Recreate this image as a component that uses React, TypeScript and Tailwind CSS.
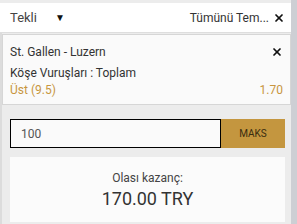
import { X } from 'lucide-react';

export default function App() {
  return (
    <div className="w-[297px] h-[224px] flex bg-[#ececec] overflow-hidden text-[#333] font-['Roboto',sans-serif] text-[12px]">
      <div className="w-[291px] flex flex-col">
        {/* Header */}
        <div className="mt-[3px] h-[30px] bg-white border-b border-[#dedede] flex items-center justify-between pl-[10px] pr-[6px]">
          <div className="flex items-center">
            <span className="text-[13px] text-[#444]">Tekli</span>
            <span className="ml-[18px] text-[10px] text-[#111]">▼</span>
          </div>
          <div className="flex items-center gap-[4px]">
            <span className="text-[12px] text-[#333]">Tümünü Tem...</span>
            <X className="w-[12px] h-[12px] text-[#111]" strokeWidth={3.5} />
          </div>
        </div>

        {/* Body */}
        <div className="flex-1 border-l-2 border-[#dcdcdc] flex flex-col">
          {/* Selection card */}
          <div className="mt-[1px] h-[71px] bg-[#fafafa] border border-[#d6d6d6] pl-[7px] pr-[7px] pt-[9px] flex flex-col">
            <div className="h-[16px] flex items-center justify-between">
              <span className="text-[12px]">St. Gallen - Luzern</span>
              <X className="w-[12px] h-[12px] text-[#111]" strokeWidth={3.5} />
            </div>
            <div className="h-[16px] mt-[5px] flex items-center">
              <span className="text-[12px]">Köşe Vuruşları : Toplam</span>
            </div>
            <div className="h-[16px] mt-[1px] flex items-center justify-between text-[#c8963e]">
              <span>Üst (9.5)</span>
              <span className="mr-[0px]">1.70</span>
            </div>
          </div>

          {/* Stake input */}
          <div className="mt-[14px] ml-[8px] flex h-[29px] w-[275px]">
            <div className="flex-1 bg-[#fafafa] border border-black flex items-center pl-[10px] text-[12px] text-[#555]">
              100
            </div>
            <div className="w-[64px] bg-[#c4963f] flex items-center justify-center text-[10px] text-[#3a2c10]">
              MAKS
            </div>
          </div>

          {/* Potential win */}
          <div className="mt-[9px] ml-[8px] w-[275px] h-[65px] bg-[#fbfbfb] flex flex-col items-center justify-center">
            <span className="text-[12px] text-[#444] leading-[16px]">Olası kazanç:</span>
            <span className="text-[18px] text-[#333] leading-[22px] mt-[2px]">170.00 TRY</span>
          </div>
        </div>
      </div>
      <div className="w-[6px] bg-[#cdcfd4]" />
    </div>
  );
}
